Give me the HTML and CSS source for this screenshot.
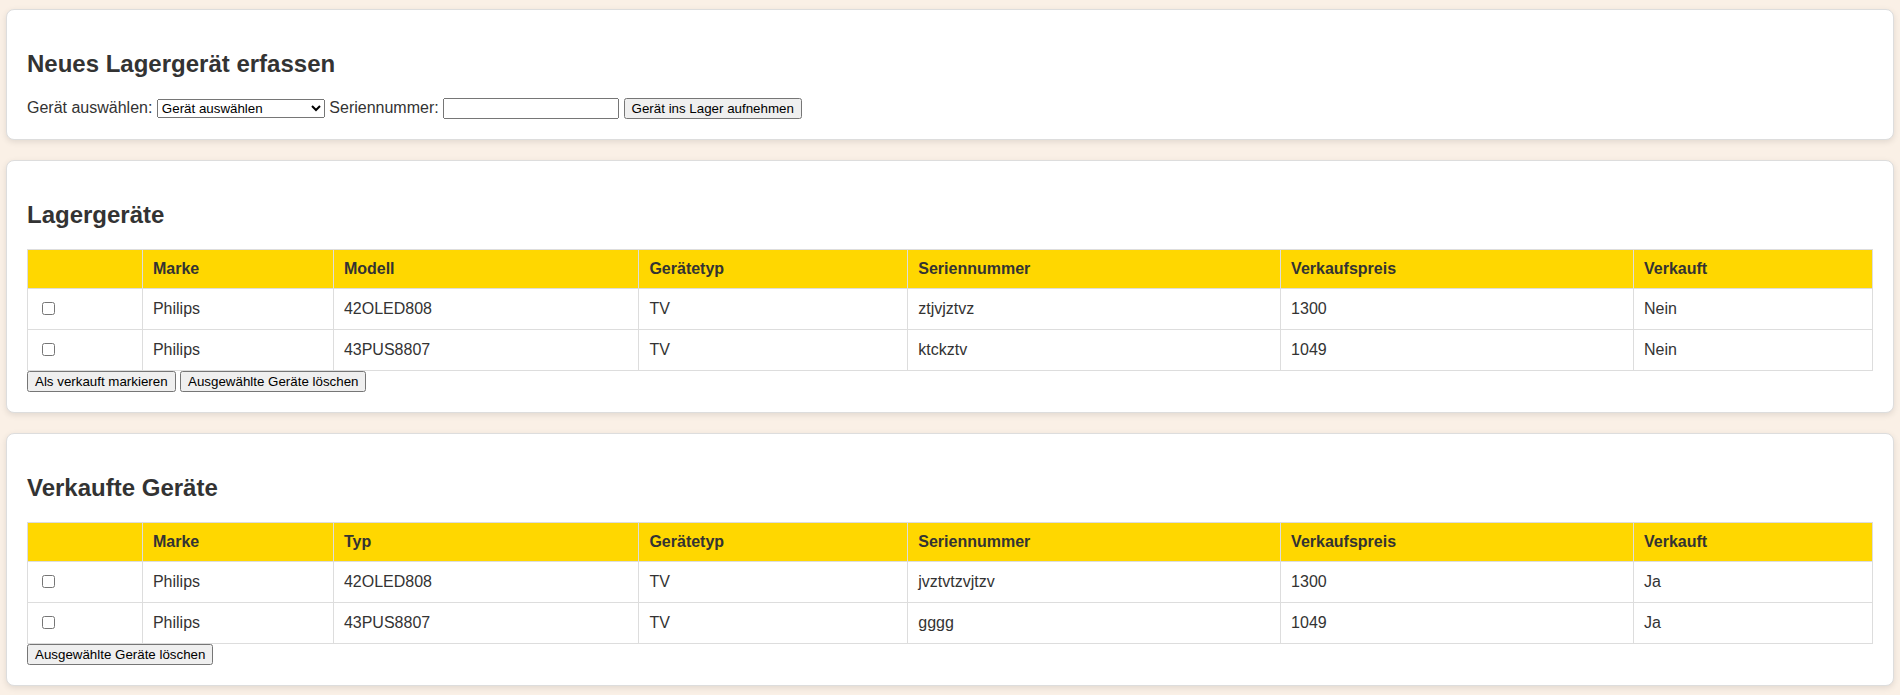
FILE: index.html
```html
<!DOCTYPE html>
<html lang="de">
<head>
<meta charset="utf-8">
<title>Lagerverwaltung</title>
<link rel="stylesheet" href="styles.css">
</head>
<body>
<div class="page">
  <section class="card">
    <h2 class="card-title">Neues Lagergerät erfassen</h2>
    <div class="form-row">
      <label for="geraet">Gerät auswählen:</label>
      <select id="geraet" class="device-select">
        <option>Gerät auswählen</option>
        <option>Philips 42OLED808</option>
        <option>Philips 43PUS8807</option>
      </select>
      <label for="sn">Seriennummer:</label>
      <input id="sn" type="text" class="sn-input">
      <button type="button" class="btn">Gerät ins Lager aufnehmen</button>
    </div>
  </section>

  <section class="card">
    <h2 class="card-title">Lagergeräte</h2>
    <table class="data-table">
      <colgroup>
        <col class="c-check"><col class="c-marke"><col class="c-modell"><col class="c-typ"><col class="c-sn"><col class="c-preis"><col class="c-verkauft">
      </colgroup>
      <thead>
        <tr><th></th><th>Marke</th><th>Modell</th><th>Gerätetyp</th><th>Seriennummer</th><th>Verkaufspreis</th><th>Verkauft</th></tr>
      </thead>
      <tbody>
        <tr><td><input type="checkbox"></td><td>Philips</td><td>42OLED808</td><td>TV</td><td>ztjvjztvz</td><td>1300</td><td>Nein</td></tr>
        <tr><td><input type="checkbox"></td><td>Philips</td><td>43PUS8807</td><td>TV</td><td>ktckztv</td><td>1049</td><td>Nein</td></tr>
      </tbody>
    </table>
    <div class="actions">
      <button type="button" class="btn">Als verkauft markieren</button>
      <button type="button" class="btn">Ausgewählte Geräte löschen</button>
    </div>
  </section>

  <section class="card">
    <h2 class="card-title">Verkaufte Geräte</h2>
    <table class="data-table">
      <colgroup>
        <col class="c-check"><col class="c-marke"><col class="c-modell"><col class="c-typ"><col class="c-sn"><col class="c-preis"><col class="c-verkauft">
      </colgroup>
      <thead>
        <tr><th></th><th>Marke</th><th>Typ</th><th>Gerätetyp</th><th>Seriennummer</th><th>Verkaufspreis</th><th>Verkauft</th></tr>
      </thead>
      <tbody>
        <tr><td><input type="checkbox"></td><td>Philips</td><td>42OLED808</td><td>TV</td><td>jvztvtzvjtzv</td><td>1300</td><td>Ja</td></tr>
        <tr><td><input type="checkbox"></td><td>Philips</td><td>43PUS8807</td><td>TV</td><td>gggg</td><td>1049</td><td>Ja</td></tr>
      </tbody>
    </table>
    <div class="actions">
      <button type="button" class="btn">Ausgewählte Geräte löschen</button>
    </div>
  </section>
</div>
</body>
</html>
```

FILE: styles.css
```css
html, body {
  margin: 0;
  padding: 0;
  background: #faf0e6;
}

body {
  font-family: "Liberation Sans", Arial, sans-serif;
  font-size: 16px;
  color: #333;
}

.page {
  padding: 9px 6px 0 6px;
}

.card {
  background: #fff;
  border: 1px solid #ddd;
  border-radius: 8px;
  box-shadow: 0 2px 6px rgba(0, 0, 0, 0.1);
  padding: 20px;
  margin-bottom: 20px;
}

.card-title {
  font-size: 24px;
  font-weight: bold;
  margin: 20px 0;
  color: #333;
}

.form-row {
  line-height: normal;
}

.device-select {
  width: 168px;
  font-family: "Liberation Sans", Arial, sans-serif;
  font-size: 13.333px;
}

.sn-input {
  box-sizing: border-box;
  width: 176px;
  font-family: "Liberation Sans", Arial, sans-serif;
  font-size: 13.333px;
}

.btn {
  font-family: "Liberation Sans", Arial, sans-serif;
  font-size: 13.333px;
}

.data-table {
  width: 100%;
  border-collapse: collapse;
}

.c-check { width: 6.23%; }
.c-marke { width: 10.35%; }
.c-modell { width: 16.56%; }
.c-typ { width: 14.57%; }
.c-sn { width: 20.21%; }
.c-preis { width: 19.13%; }
.c-verkauft { width: 12.95%; }

.data-table th,
.data-table td {
  border: 1px solid #ddd;
  padding: 10px;
  text-align: left;
}

.data-table th {
  background: #ffd700;
  font-weight: bold;
}

.actions {
  line-height: normal;
}
```
